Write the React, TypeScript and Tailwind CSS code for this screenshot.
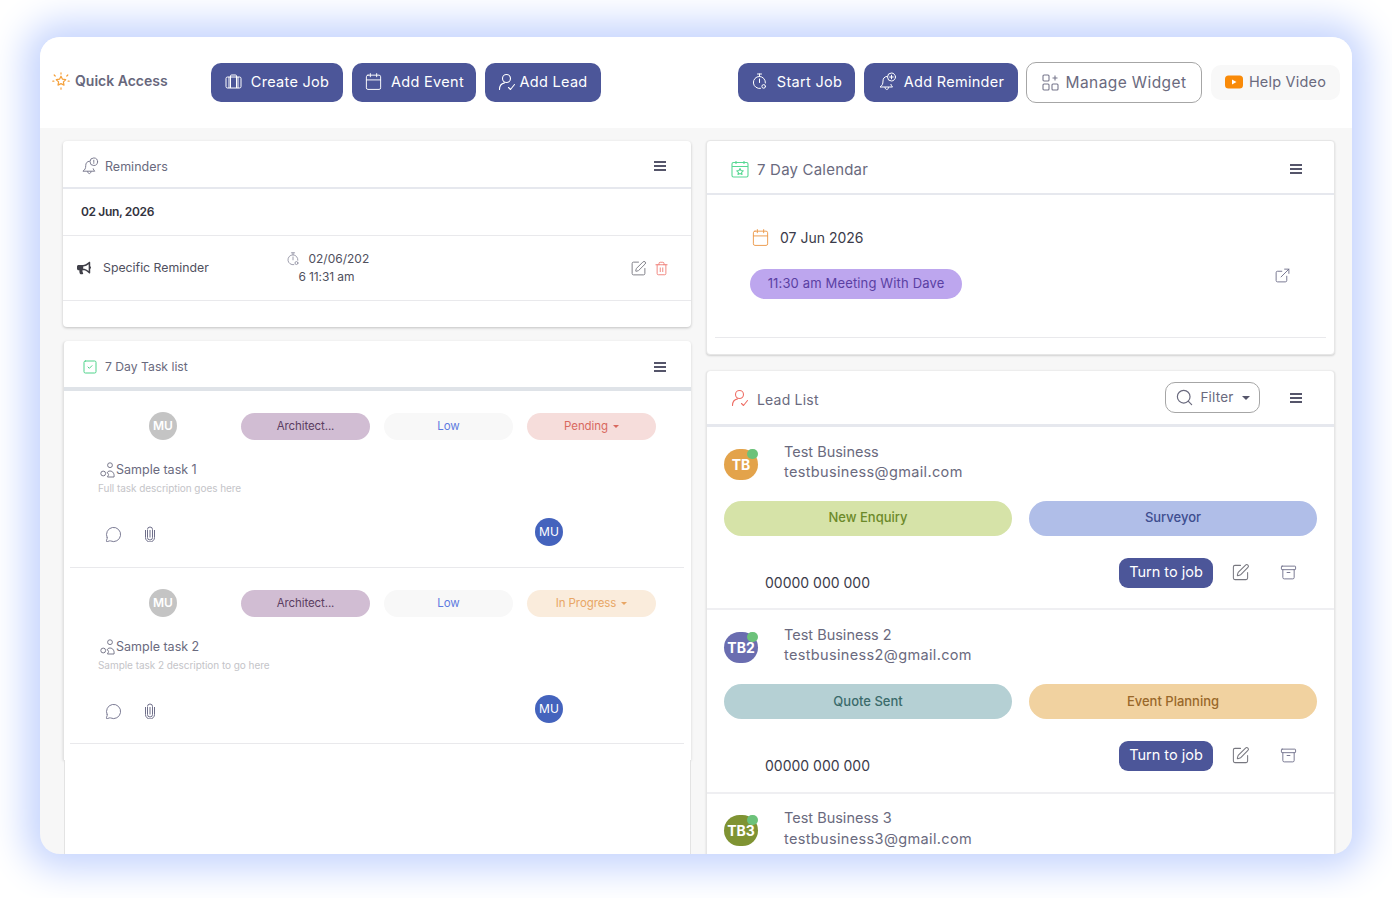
import type { ReactNode } from 'react';

import {
  Archive,
  Calendar,
  ExternalLink,
  MessageCircle,
  Search,
  SquareCheck,
  SquarePen,
  Trash2,
} from 'lucide-react';
import { FaBullhorn } from 'react-icons/fa';

// Small hand drawn icons that the packages don't carry
function StarBurst() {
  return (
    <svg width="18" height="18" viewBox="0 0 18 18" fill="none" stroke="#f5a13c" strokeWidth="1.200" strokeLinejoin="round" strokeLinecap="round">
      <path d="M9 4.200l1.500 3 3.200.5-2.300 2.200.6 3.200L9 11.600l-3 1.500.6-3.200-2.300-2.200 3.200-.5z" />
      <path d="M9 .8v1.300M9 15.900v1.300M2.200 3l1 1M15.800 3l-1 1M.8 9.200h1.100M16.100 9.200h1.100" />
    </svg>
  );
}

function Bag({ className = 'text-white' }: { className?: string }) {
  return (
    <svg className={className} width="17" height="15" viewBox="0 0 17 15" fill="none" stroke="currentColor" strokeWidth="1">
      <rect x="1" y="3" width="15" height="11" rx="1.500" />
      <path d="M5.500 14V2a1 1 0 0 1 1-1h4a1 1 0 0 1 1 1v12M4 3v11M13 3v11" />
    </svg>
  );
}

function UserTick({ color = 'white', size = 18 }: { color?: string; size?: number }) {
  return (
    <svg width={size} height={size} viewBox="0 0 18 18" fill="none" stroke={color} strokeWidth="1.100" strokeLinecap="round" strokeLinejoin="round">
      <circle cx="8.500" cy="5.500" r="4" />
      <path d="M1.500 16.500c0-3.500 2.200-6 5-6.600M10.500 14.500l2 2 4-5" />
    </svg>
  );
}

function Stopwatch({ color = 'white', size = 17 }: { color?: string; size?: number }) {
  return (
    <svg width={size} height={size} viewBox="0 0 17 17" fill="none" stroke={color} strokeWidth="1" strokeLinecap="round">
      <path d="M6.500 1h4M8.500 1v2.400M8.500 6v3.500" />
      <path d="M9.500 15.400A6 6 0 1 1 14.400 10" />
      <circle cx="12.700" cy="13.400" r="1.800" />
    </svg>
  );
}

function BellDot({ color = 'white', plus = false, size = 19 }: { color?: string; plus?: boolean; size?: number }) {
  return (
    <svg width={size} height={size} viewBox="0 0 19 19" fill="none" stroke={color} strokeWidth="1" strokeLinecap="round" strokeLinejoin="round">
      <path d="M9 4.400C6.200 4.600 5 6.600 5 9c0 3-.8 4.600-3 6h12.500c-.8-.8-1.300-1.500-1.600-2.600" />
      <path d="M7 15.500c.2 1.300 1 2 1.800 2s1.600-.7 1.800-2" />
      <circle cx="13.500" cy="5" r="4" />
      {plus ? <path d="M13.500 3.200v3.600M11.700 5h3.600" /> : <path d="M13.500 3.400v2.200M13.500 6.500v.2" />}
    </svg>
  );
}

function WidgetGrid() {
  return (
    <svg width="17" height="17" viewBox="0 0 17 17" fill="none" stroke="#77778c" strokeWidth="1.100">
      <rect x="1" y="1" width="6" height="6" rx="1" />
      <rect x="1" y="10" width="6" height="6" rx="1" />
      <rect x="10" y="10" width="6" height="6" rx="1" />
      <path d="M13 1.500v5M10.500 4h5" />
    </svg>
  );
}

function PlayBadge() {
  return (
    <svg width="18" height="14" viewBox="0 0 18 14">
      <rect width="18" height="13" y="0.500" rx="3.500" fill="#f98a08" />
      <path d="M7 4.500l4.500 2.500L7 9.500z" fill="white" />
    </svg>
  );
}

function CalendarStar() {
  return (
    <svg width="18" height="18" viewBox="0 0 18 18" fill="none" stroke="#58d893" strokeWidth="1.100" strokeLinejoin="round">
      <rect x="1" y="2.500" width="16" height="14.500" rx="1.500" />
      <path d="M1 6.500h16M5 1v3M13 1v3" />
      <path d="M9 8.500l1 2 2.200.3-1.600 1.500.4 2.200-2-1-2 1 .4-2.200-1.600-1.500 2.200-.3z" />
    </svg>
  );
}

function TaskPeople() {
  return (
    <svg width="16" height="16" viewBox="0 0 16 16" fill="none" stroke="#6c6c80" strokeWidth="0.900">
      <circle cx="3.200" cy="11.500" r="2.400" />
      <circle cx="10" cy="3.200" r="2.400" />
      <path d="M7.500 15h6.500c.6-3-1-6-4-6-1.600 0-2.600.8-2.800 2 1.200.2 1.600 1.200 1.200 2.200-.3.600-.6 1-.9 1.800z" />
    </svg>
  );
}

function Clip() {
  return (
    <svg width="12" height="16" viewBox="0 0 12 16" fill="none" stroke="#6f6f8a" strokeWidth="1">
      <path d="M3.500 4v7.500a2.500 2.500 0 0 0 5 0V3.500a2.500 2.500 0 0 0-5 0" />
      <path d="M1.500 4v7.500a4.500 4.500 0 0 0 9 0V4M6 4v7.500" />
    </svg>
  );
}

function Burger() {
  return (
    <span className="flex w-[12px] flex-col gap-[2px]">
      <span className="h-[2px] bg-[#55556a]" />
      <span className="h-[2px] bg-[#55556a]" />
      <span className="h-[2px] bg-[#55556a]" />
    </span>
  );
}

function Caret({ className }: { className: string }) {
  return <span className={`h-0 w-0 border-x-[3px] border-t-[3px] border-x-transparent ${className}`} />;
}

function TopButton({ icon, label, width, gap }: { icon: ReactNode; label: string; width: string; gap: string }) {
  return (
    <div className={`flex h-[39px] items-center justify-center rounded-[10px] bg-[#4c5699] pb-[2px] text-[14.500px] tracking-[0.3px] text-white ${width} ${gap}`}>
      {icon}
      {label}
    </div>
  );
}

function Pill({ className, children }: { className: string; children: ReactNode }) {
  return (
    <div className={`flex h-[27px] w-[129px] items-center justify-center gap-[5px] rounded-full pt-[1px] text-[11.500px] tracking-[-0.1px] ${className}`}>
      {children}
    </div>
  );
}

function TaskRow({ title, desc, status }: { title: string; desc: string; status: ReactNode }) {
  return (
    <div className="mr-[7px] ml-[6px] h-[177px] border-b border-[#e9e9ec] pt-[21px] last:h-[176px]">
      <div className="flex items-center">
        <div className="ml-[79px] flex h-[28px] w-[28px] items-center justify-center rounded-full bg-[#c4c4c4] text-[12px] font-semibold text-white">
          MU
        </div>
        <div className="ml-[64px] flex gap-[14px]">
          <Pill className="bg-[#d1bdd3] text-[#5b3d62]">Architect...</Pill>
          <Pill className="bg-[#f8f8f8] text-[#5f7be0]">Low</Pill>
          {status}
        </div>
      </div>
      <div className="mt-[21px] ml-[30px] flex items-center text-[12.500px] text-[#6a6a7e]">
        <TaskPeople />
        {title}
      </div>
      <div className="mt-[1px] ml-[28px] text-[10px] tracking-[-0.05px] text-[#c4c4c8]">{desc}</div>
      <div className="relative mt-[30px] ml-[35px] flex items-center gap-[22px]">
        <MessageCircle size={17} strokeWidth={1.300} className="text-[#6f6f8a]" />
        <Clip />
        <div className="absolute top-[-8px] left-[430px] flex h-[28px] w-[28px] items-center justify-center rounded-full bg-[#4463bd] text-[12px] text-white">
          MU
        </div>
      </div>
    </div>
  );
}

function LeadRow({
  initials,
  avatar,
  name,
  email,
  left,
  right,
}: {
  initials: string;
  avatar: string;
  name: string;
  email: string;
  left?: ReactNode;
  right?: ReactNode;
}) {
  return (
    <div className="h-[183.300px] border-b-2 border-[#efeff2] px-[17px] pt-[14.500px]">
      <div className="flex">
        <div className={`relative mt-[7px] flex h-[31px] w-[34px] items-center justify-center rounded-full text-[14px] font-bold text-white ${avatar}`}>
          {initials}
          <span className="absolute top-0 right-0 h-[10px] w-[11px] rounded-full bg-[#6cc27a]" />
        </div>
        <div className="ml-[26px] text-[14.500px] leading-[20.500px] text-[#6a6a7e]">
          <div>{name}</div>
          <div className="tracking-[0.35px]">{email}</div>
        </div>
      </div>
      {left && right && (
        <>
          <div className="mt-[18px] flex gap-[17px] text-[13px] font-medium">
            {left}
            {right}
          </div>
          <div className="mt-[22.500px] flex items-start">
            <div className="mt-[14px] ml-[41px] text-[14px] text-[#3b3b4a]">00000 000 000</div>
            <div className="ml-auto flex h-[30px] w-[94px] items-center justify-center rounded-[9px] bg-[#4c5699] pb-[3px] text-[14.500px] text-white">
              Turn to job
            </div>
            <div className="mr-[20px] ml-[18px] flex items-center gap-[30px] pt-[5px]">
              <SquarePen size={19} strokeWidth={1.300} className="text-[#77777f]" />
              <Archive size={17} strokeWidth={1.300} className="text-[#6f6f8a]" />
            </div>
          </div>
        </>
      )}
    </div>
  );
}

function Badge({ className, children }: { className: string; children: ReactNode }) {
  return (
    <div className={`flex h-[35px] flex-1 items-center justify-center rounded-full ${className}`}>{children}</div>
  );
}

export default function App() {
  return (
    <div
      className="h-[898px] w-[1392px] overflow-hidden bg-white pt-[37px] pl-[40px]"
      style={{ fontFamily: 'Inter, "Noto Sans", sans-serif' }}
    >
      <div className="h-[817px] w-[1312px] overflow-hidden rounded-[20px] bg-[#f7f7f7] shadow-[0_0_36px_15px_#c6d5fe]">
        {/* Quick access bar */}
        <div className="flex h-[91px] items-start bg-white pt-[26px] pl-[12px]">
          <div className="mt-[7px] flex w-[159px] items-center gap-[5px] text-[14px] font-semibold text-[#67677c]">
            <StarBurst />
            Quick Access
          </div>
          <div className="flex gap-[9px]">
            <TopButton width="w-[132px]" gap="gap-[9px]" icon={<Bag />} label="Create Job" />
            <TopButton width="w-[124px]" gap="gap-[8px]" icon={<Calendar size={19} strokeWidth={1.200} />} label="Add Event" />
            <TopButton width="w-[116px]" gap="gap-[3px]" icon={<UserTick />} label="Add Lead" />
          </div>
          <div className="ml-[137px] flex gap-[9px]">
            <TopButton width="w-[117px]" gap="gap-[9px]" icon={<Stopwatch />} label="Start Job" />
            <TopButton width="w-[154px]" gap="gap-[7px]" icon={<BellDot plus />} label="Add Reminder" />
          </div>
          <div className="mt-[-1px] ml-[8px] flex h-[41px] w-[176px] items-center justify-center gap-[7px] rounded-[10px] border border-[#a6a6a6] bg-white text-[15.500px] tracking-[0.4px] text-[#6a6a7e]">
            <WidgetGrid />
            Manage Widget
          </div>
          <div className="mt-[2px] ml-[9px] flex h-[35px] w-[129px] items-center justify-center gap-[6px] rounded-[10px] bg-[#f8f8f8] pb-[2px] text-[14.500px] tracking-[0.2px] text-[#6a6a7e]">
            <PlayBadge />
            Help Video
          </div>
        </div>

        <div className="flex gap-[15px] pl-[23px]">
          {/* Left column */}
          <div className="w-[628px] pt-[13px]">
            <div className="h-[186px] rounded-[4px] bg-white shadow-[0_1px_3px_rgba(0,0,0,0.22)]">
              <div className="flex h-[48px] items-center border-b-2 border-[#e6e8ee] pt-[4px] pr-[25px] pl-[18px] text-[12.500px] text-[#6a6a7e]">
                <BellDot color="#77778c" size={18} />
                <span className="mt-[2px] ml-[6px]">Reminders</span>
                <span className="ml-auto">
                  <Burger />
                </span>
              </div>
              <div className="flex h-[47px] items-center border-b border-[#e9e9ec] pl-[18px] text-[12px] font-semibold tracking-[-0.35px] text-[#333340]">
                02 Jun, 2026
              </div>
              <div className="flex h-[65px] items-center border-b border-[#e9e9ec] pl-[14px] text-[#50505e]">
                <FaBullhorn size={14} className="text-[#3f3f48]" />
                <span className="ml-[12px] text-[12.300px]">Specific Reminder</span>
                <div className="ml-[74px] w-[90px] text-center text-[12px] leading-[18px]">
                  <div className="flex items-center justify-center gap-[8px]">
                    <Stopwatch color="#8a8a9c" size={14} />
                    02/06/202
                  </div>
                  <div className="pr-[3px] tracking-[-0.1px]">6 11:31 am</div>
                </div>
                <div className="mr-[22px] ml-auto flex items-center gap-[7px]">
                  <SquarePen size={17} strokeWidth={1.300} className="text-[#77777f]" />
                  <Trash2 size={15} strokeWidth={1.300} className="text-[#ee6f66]" />
                </div>
              </div>
            </div>

            <div className="mt-[14px] h-[419px] rounded-t-[4px] border-l border-[#e3e3e3] bg-white shadow-[0_1px_3px_rgba(0,0,0,0.15)]">
              <div className="box-content flex h-[40px] items-center border-b-4 border-[#dfe3e8] pt-[6px] pr-[25px] pl-[18px] text-[12.200px] text-[#6a6a7e]">
                <SquareCheck size={16} strokeWidth={1.500} className="text-[#4fd38a]" />
                <span className="ml-[7px]">7 Day Task list</span>
                <span className="ml-auto">
                  <Burger />
                </span>
              </div>
              <TaskRow
                title="Sample task 1"
                desc="Full task description goes here"
                status={
                  <Pill className="bg-[#f6dddb] text-[#d9695f]">
                    Pending
                    <Caret className="border-t-[#d9695f]" />
                  </Pill>
                }
              />
              <TaskRow
                title="Sample task 2"
                desc="Sample task 2 description to go here"
                status={
                  <Pill className="bg-[#faecdc] text-[#e8a665]">
                    In Progress
                    <Caret className="border-t-[#e8a665]" />
                  </Pill>
                }
              />
            </div>
            <div className="ml-px h-[100px] border-x border-[#e3e3e3] bg-white" />
          </div>

          {/* Right column */}
          <div className="w-[629px] pt-[12px]">
            <div className="h-[215px] rounded-[4px] border border-[#e6e6e6] bg-white shadow-[0_1px_2px_rgba(0,0,0,0.15)]">
              <div className="flex h-[54px] items-center border-b-2 border-[#e6e8ee] pt-[4px] pr-[32px] pl-[24px] text-[15px] tracking-[0.2px] text-[#6a6a7e]">
                <CalendarStar />
                <span className="mt-[2px] ml-[8px]">7 Day Calendar</span>
                <span className="ml-auto">
                  <Burger />
                </span>
              </div>
              <div className="mx-[8px] h-[143px] border-b border-[#e9e9ec] pt-[32px]">
                <div className="ml-[36px] flex items-center gap-[10px] text-[14px] text-[#3b3b4a]">
                  <Calendar size={19} strokeWidth={1.200} className="text-[#ec9b4d]" />
                  07 Jun 2026
                </div>
                <div className="flex items-center">
                  <div className="mt-[21px] ml-[35px] flex h-[30px] w-[212px] items-center justify-center rounded-full bg-[#bda6ee] text-[13px] tracking-[0.15px] text-[#5a3fa3]">
                    11:30 am Meeting With Dave
                  </div>
                  <ExternalLink size={17} strokeWidth={1.300} className="mt-[3px] mr-[35px] ml-auto text-[#6f6f8a]" />
                </div>
              </div>
            </div>

            <div className="mt-[16px] rounded-t-[4px] border-x border-[#e6e6e6] bg-white shadow-[0_0_2px_rgba(0,0,0,0.15)]">
              <div className="flex h-[56px] items-center border-b-[3px] border-[#e6e8ee] pr-[32px] pl-[24px] text-[14px] tracking-[0.2px] text-[#6a6a7e]">
                <UserTick color="#ee6f66" />
                <span className="mt-[3px] ml-[8px]">Lead List</span>
                <div className="mr-[30px] ml-auto flex h-[31px] w-[95px] items-center justify-center gap-[6px] rounded-[10px] border border-[#a6a6a6] text-[13.500px]">
                  <Search size={19} strokeWidth={1.500} />
                  Filter
                  <Caret className="ml-[2px] border-x-[4px] border-t-[4px] border-t-[#55556a]" />
                </div>
                <Burger />
              </div>
              <LeadRow
                initials="TB"
                avatar="bg-[#e3a34b]"
                name="Test Business"
                email="testbusiness@gmail.com"
                left={<Badge className="bg-[#d6e3a8] text-[#6c8a2a]">New Enquiry</Badge>}
                right={<Badge className="bg-[#b0bee8] text-[#3d4d8f]">Surveyor</Badge>}
              />
              <LeadRow
                initials="TB2"
                avatar="bg-[#6a6db0]"
                name="Test Business 2"
                email="testbusiness2@gmail.com"
                left={<Badge className="bg-[#b5d0d4] text-[#3b6b6b]">Quote Sent</Badge>}
                right={<Badge className="bg-[#f1d2a0] text-[#99682a]">Event Planning</Badge>}
              />
              <LeadRow
                initials="TB3"
                avatar="bg-[#7f9333]"
                name="Test Business 3"
                email="testbusiness3@gmail.com"
              />
            </div>
          </div>
        </div>
      </div>
    </div>
  );
}
